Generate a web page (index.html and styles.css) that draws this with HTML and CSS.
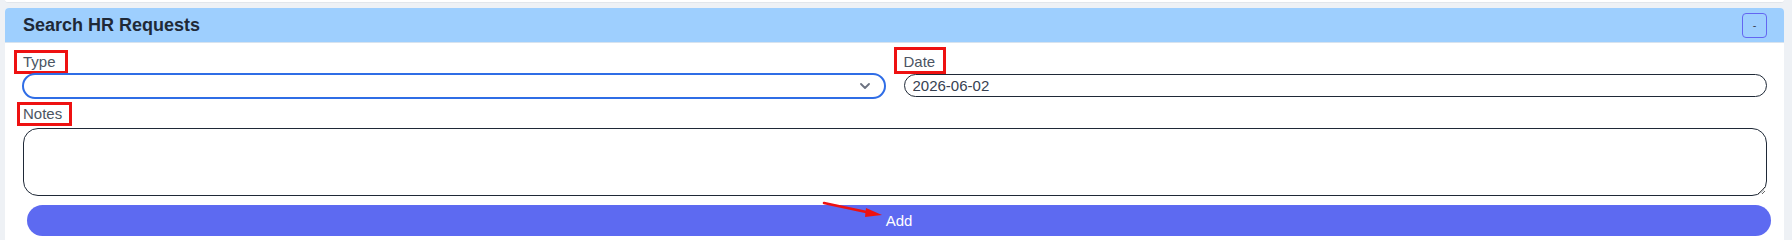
FILE: index.html
```html
<!DOCTYPE html>
<html>
  <head>
    <meta charset="UTF-8" />
    <meta name="viewport" content="width=device-width, initial-scale=1" />
    <title>Search HR Requests</title>
    <link rel="stylesheet" href="styles.css">
  </head>
  <body>
    <div class="page">
      <div class="prev-card"></div>

      <section class="card">
        <header class="card-head">
          <h2>Search HR Requests</h2>
          <button class="toggle" type="button">-</button>
        </header>

        <form class="card-body">
          <div class="row">
            <div class="field">
              <label class="mark mark-type" for="type">Type</label>
              <select id="type" class="select"></select>
            </div>
            <div class="field">
              <label class="mark mark-date" for="date">Date</label>
              <input id="date" class="text-input" type="text" value="2026-06-02" />
            </div>
          </div>

          <div class="field notes">
            <label class="mark mark-notes" for="notes">Notes</label>
            <textarea id="notes"></textarea>
          </div>

          <button class="add" type="button">Add</button>
        </form>

        <!-- annotation arrow pointing at the Add button -->
        <svg class="arrow" width="70" height="24" viewBox="0 0 70 24">
          <line x1="5" y1="5" x2="52" y2="15" stroke="#ee1111" stroke-width="2.6" stroke-linecap="round" />
          <polygon points="47,10 63,17 46,19" fill="#ee1111" />
        </svg>
      </section>
    </div>
  </body>
</html>
```

FILE: styles.css
```css
html,
body {
  margin: 0;
  height: 100%;
  overflow: hidden;
}

body {
  font-family: "Liberation Sans", Arial, Helvetica, sans-serif;
  background-color: #eef1f5; /* light page background */
  color: #1f2937;
}

.page {
  padding: 0 8px 0 5px;
}

/* bottom edge of the card above, cut off by the viewport */
.prev-card {
  height: 2px;
  background-color: #fff;
  border-bottom: 1px solid #e2e6eb;
  border-radius: 0 0 4px 4px;
  margin-bottom: 5px;
}

.card {
  position: relative;
  background-color: #fff;
  border-radius: 4px 4px 0 0;
  min-height: 240px;
}

.card-head {
  display: flex;
  align-items: center;
  justify-content: space-between;
  height: 34px;
  padding: 0 17px 0 18px;
  background-color: #9ecffe;
  border-bottom: 1px solid #d7e3ef;
  border-radius: 4px 4px 0 0;
}

.card-head h2 {
  margin: 0;
  font-size: 18px;
  font-weight: bold;
  color: #1f2937;
}

.toggle {
  width: 25px;
  height: 25px;
  padding: 0;
  border: 1.5px solid #6366f1;
  border-radius: 4px;
  background: transparent;
  font-family: inherit;
  font-size: 11px;
  color: #374151;
  cursor: pointer;
}

.card-body {
  padding: 0 17px;
}

.row {
  display: grid;
  grid-template-columns: 1fr 1fr;
  column-gap: 18px;
  align-items: start;
}

.field {
  display: flex;
  flex-direction: column;
}

/* red annotation boxes round the labels */
.mark {
  align-self: flex-start;
  border: 3px solid #ee1111;
  line-height: 18px;
  font-size: 15px;
  color: #4b5563;
}

.mark-type {
  margin: 7px 0 -1px -8px;
  padding: 0 9px 0 6px;
}

.mark-date {
  margin: 4px 0 0 -10px;
  padding: 3px 8px 0 7px;
}

.mark-notes {
  margin: 3px 0 0 -5px;
  padding: 0 7px 0 3px;
}

.select {
  appearance: none;
  -webkit-appearance: none;
  box-sizing: border-box;
  height: 26px;
  width: 100%;
  border: 2px solid #2f6de6;
  border-radius: 9999px;
  background-color: #fff;
  background-image: url("data:image/svg+xml,%3Csvg xmlns='http://www.w3.org/2000/svg' width='10' height='6' viewBox='0 0 10 6'%3E%3Cpath d='M1 1l4 4 4-4' fill='none' stroke='%236b7280' stroke-width='1.8' stroke-linecap='round' stroke-linejoin='round'/%3E%3C/svg%3E");
  background-repeat: no-repeat;
  background-position: right 14px center;
  background-size: 10px 6px;
  outline: none;
}

.text-input {
  box-sizing: border-box;
  height: 23px;
  width: 100%;
  padding: 0 8px;
  border: 1px solid #1f2937;
  border-radius: 9999px;
  font-family: inherit;
  font-size: 15px;
  color: #374151;
  outline: none;
}

.notes textarea {
  box-sizing: border-box;
  display: block;
  height: 68px;
  width: calc(100% - 1px);
  margin: 2px 0 0 1px;
  border: 1px solid #1f2937;
  border-radius: 15px;
  font-family: inherit;
  font-size: 15px;
  resize: vertical;
  outline: none;
}

.add {
  display: block;
  box-sizing: border-box;
  height: 31px;
  width: calc(100% - 1px);
  margin: 9px 0 0 5px;
  border: none;
  border-radius: 9999px;
  background-color: #5d6af1;
  color: #fff;
  font-family: inherit;
  font-size: 15px;
  cursor: pointer;
}

.arrow {
  position: absolute;
  left: 814px;
  top: 190px;
}
```
